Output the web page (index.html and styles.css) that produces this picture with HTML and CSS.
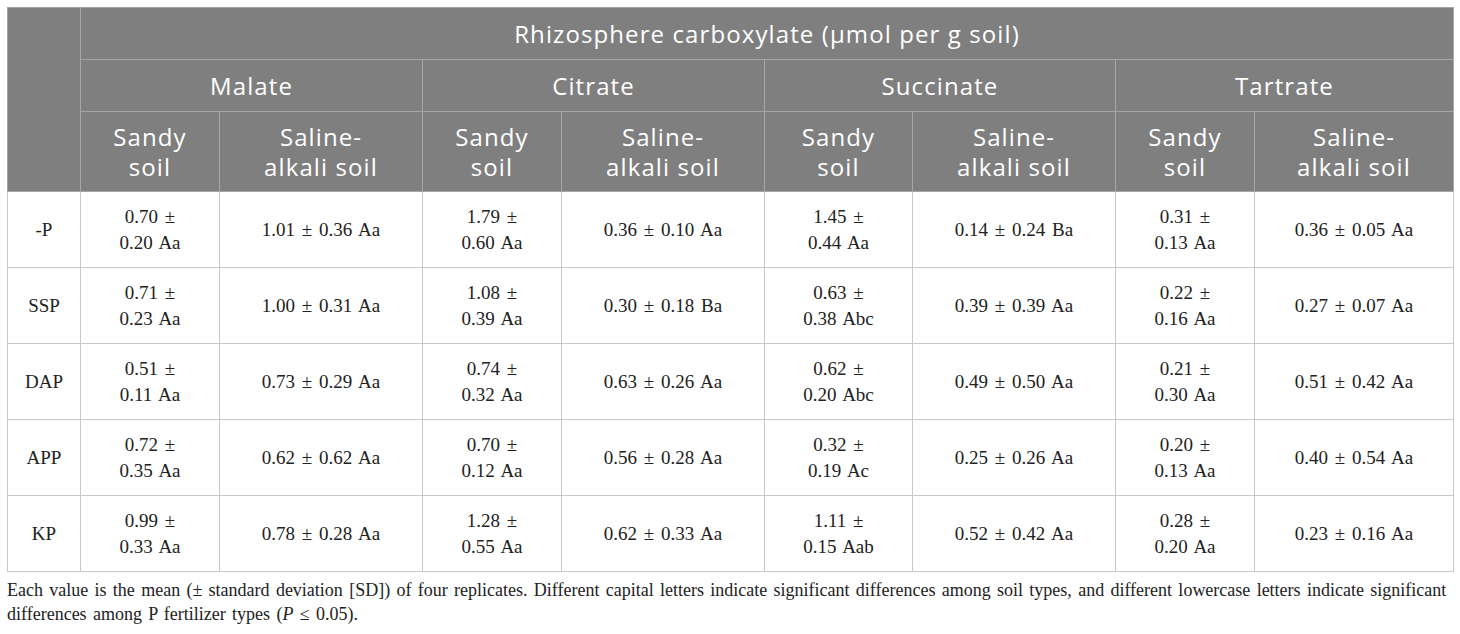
FILE: index.html
```html
<!DOCTYPE html>
<html lang="en">
<head>
  <meta charset="UTF-8">
  <title>Rhizosphere carboxylate</title>
  <link rel="stylesheet" href="styles.css">
</head>
<body>
  <table class="data">
    <colgroup>
      <col class="c-label">
      <col class="c-sandy">
      <col class="c-saline">
      <col class="c-sandy">
      <col class="c-saline">
      <col class="c-sandy-w">
      <col class="c-saline">
      <col class="c-sandy">
      <col class="c-saline-n">
    </colgroup>
    <thead>
      <tr class="h1">
        <th rowspan="3"></th>
        <th colspan="8">Rhizosphere carboxylate (µmol per g soil)</th>
      </tr>
      <tr class="h2">
        <th colspan="2">Malate</th>
        <th colspan="2">Citrate</th>
        <th colspan="2">Succinate</th>
        <th colspan="2">Tartrate</th>
      </tr>
      <tr class="h3">
        <th>Sandy<br>soil</th>
        <th>Saline-<br>alkali soil</th>
        <th>Sandy<br>soil</th>
        <th>Saline-<br>alkali soil</th>
        <th>Sandy<br>soil</th>
        <th>Saline-<br>alkali soil</th>
        <th>Sandy<br>soil</th>
        <th>Saline-<br>alkali soil</th>
      </tr>
    </thead>
    <tbody>
      <tr>
        <td>-P</td>
        <td>0.70 ±<br>0.20 Aa</td>
        <td>1.01 ± 0.36 Aa</td>
        <td>1.79 ±<br>0.60 Aa</td>
        <td>0.36 ± 0.10 Aa</td>
        <td>1.45 ±<br>0.44 Aa</td>
        <td>0.14 ± 0.24 Ba</td>
        <td>0.31 ±<br>0.13 Aa</td>
        <td>0.36 ± 0.05 Aa</td>
      </tr>
      <tr>
        <td>SSP</td>
        <td>0.71 ±<br>0.23 Aa</td>
        <td>1.00 ± 0.31 Aa</td>
        <td>1.08 ±<br>0.39 Aa</td>
        <td>0.30 ± 0.18 Ba</td>
        <td>0.63 ±<br>0.38 Abc</td>
        <td>0.39 ± 0.39 Aa</td>
        <td>0.22 ±<br>0.16 Aa</td>
        <td>0.27 ± 0.07 Aa</td>
      </tr>
      <tr>
        <td>DAP</td>
        <td>0.51 ±<br>0.11 Aa</td>
        <td>0.73 ± 0.29 Aa</td>
        <td>0.74 ±<br>0.32 Aa</td>
        <td>0.63 ± 0.26 Aa</td>
        <td>0.62 ±<br>0.20 Abc</td>
        <td>0.49 ± 0.50 Aa</td>
        <td>0.21 ±<br>0.30 Aa</td>
        <td>0.51 ± 0.42 Aa</td>
      </tr>
      <tr>
        <td>APP</td>
        <td>0.72 ±<br>0.35 Aa</td>
        <td>0.62 ± 0.62 Aa</td>
        <td>0.70 ±<br>0.12 Aa</td>
        <td>0.56 ± 0.28 Aa</td>
        <td>0.32 ±<br>0.19 Ac</td>
        <td>0.25 ± 0.26 Aa</td>
        <td>0.20 ±<br>0.13 Aa</td>
        <td>0.40 ± 0.54 Aa</td>
      </tr>
      <tr>
        <td>KP</td>
        <td>0.99 ±<br>0.33 Aa</td>
        <td>0.78 ± 0.28 Aa</td>
        <td>1.28 ±<br>0.55 Aa</td>
        <td>0.62 ± 0.33 Aa</td>
        <td>1.11 ±<br>0.15 Aab</td>
        <td>0.52 ± 0.42 Aa</td>
        <td>0.28 ±<br>0.20 Aa</td>
        <td>0.23 ± 0.16 Aa</td>
      </tr>
    </tbody>
  </table>

  <p class="note">Each value is the mean (± standard deviation [SD]) of four replicates. Different capital letters indicate significant differences among soil types, and different lowercase letters indicate significant differences among P fertilizer types (<i>P</i> ≤ 0.05).</p>
</body>
</html>
```

FILE: styles.css
```css
/* pagina base */
body {
  margin: 0;
  padding: 7px 8px 0 7px;
  background: #ffffff;
  color: #222222;
  font-family: "Liberation Serif", "Times New Roman", serif;
}

/* tabla de datos */
.data {
  width: 1446px;
  border-collapse: collapse;
  table-layout: fixed;
  border: 1px solid #c8c8c8;
}

.c-label { width: 73px; }
.c-sandy { width: 139px; }
.c-sandy-w { width: 148px; }
.c-saline { width: 203px; }
.c-saline-n { width: 199px; }

.data th {
  background-color: #7f7f7f;
  color: #ffffff;
  font-family: "Open Sans", "Noto Sans", sans-serif;
  font-weight: normal;
  font-size: 24px;
  letter-spacing: 1.1px;
  border: 1px solid #a6a6a6;
  text-align: center;
  padding: 0;
}

.data .h1 th,
.data .h2 th {
  height: 51px;
}

.data .h3 th {
  height: 79px;
  line-height: 30px;
}

.data td {
  height: 75px;
  padding: 0;
  border: 1px solid #c8c8c8;
  text-align: center;
  font-size: 19px;
  word-spacing: 2px;
  line-height: 26px;
}

/* nota al pie */
.note {
  margin: 6px 0 0 0;
  font-size: 18px;
  word-spacing: 1.8px;
  line-height: 24px;
  color: #222222;
}
```
